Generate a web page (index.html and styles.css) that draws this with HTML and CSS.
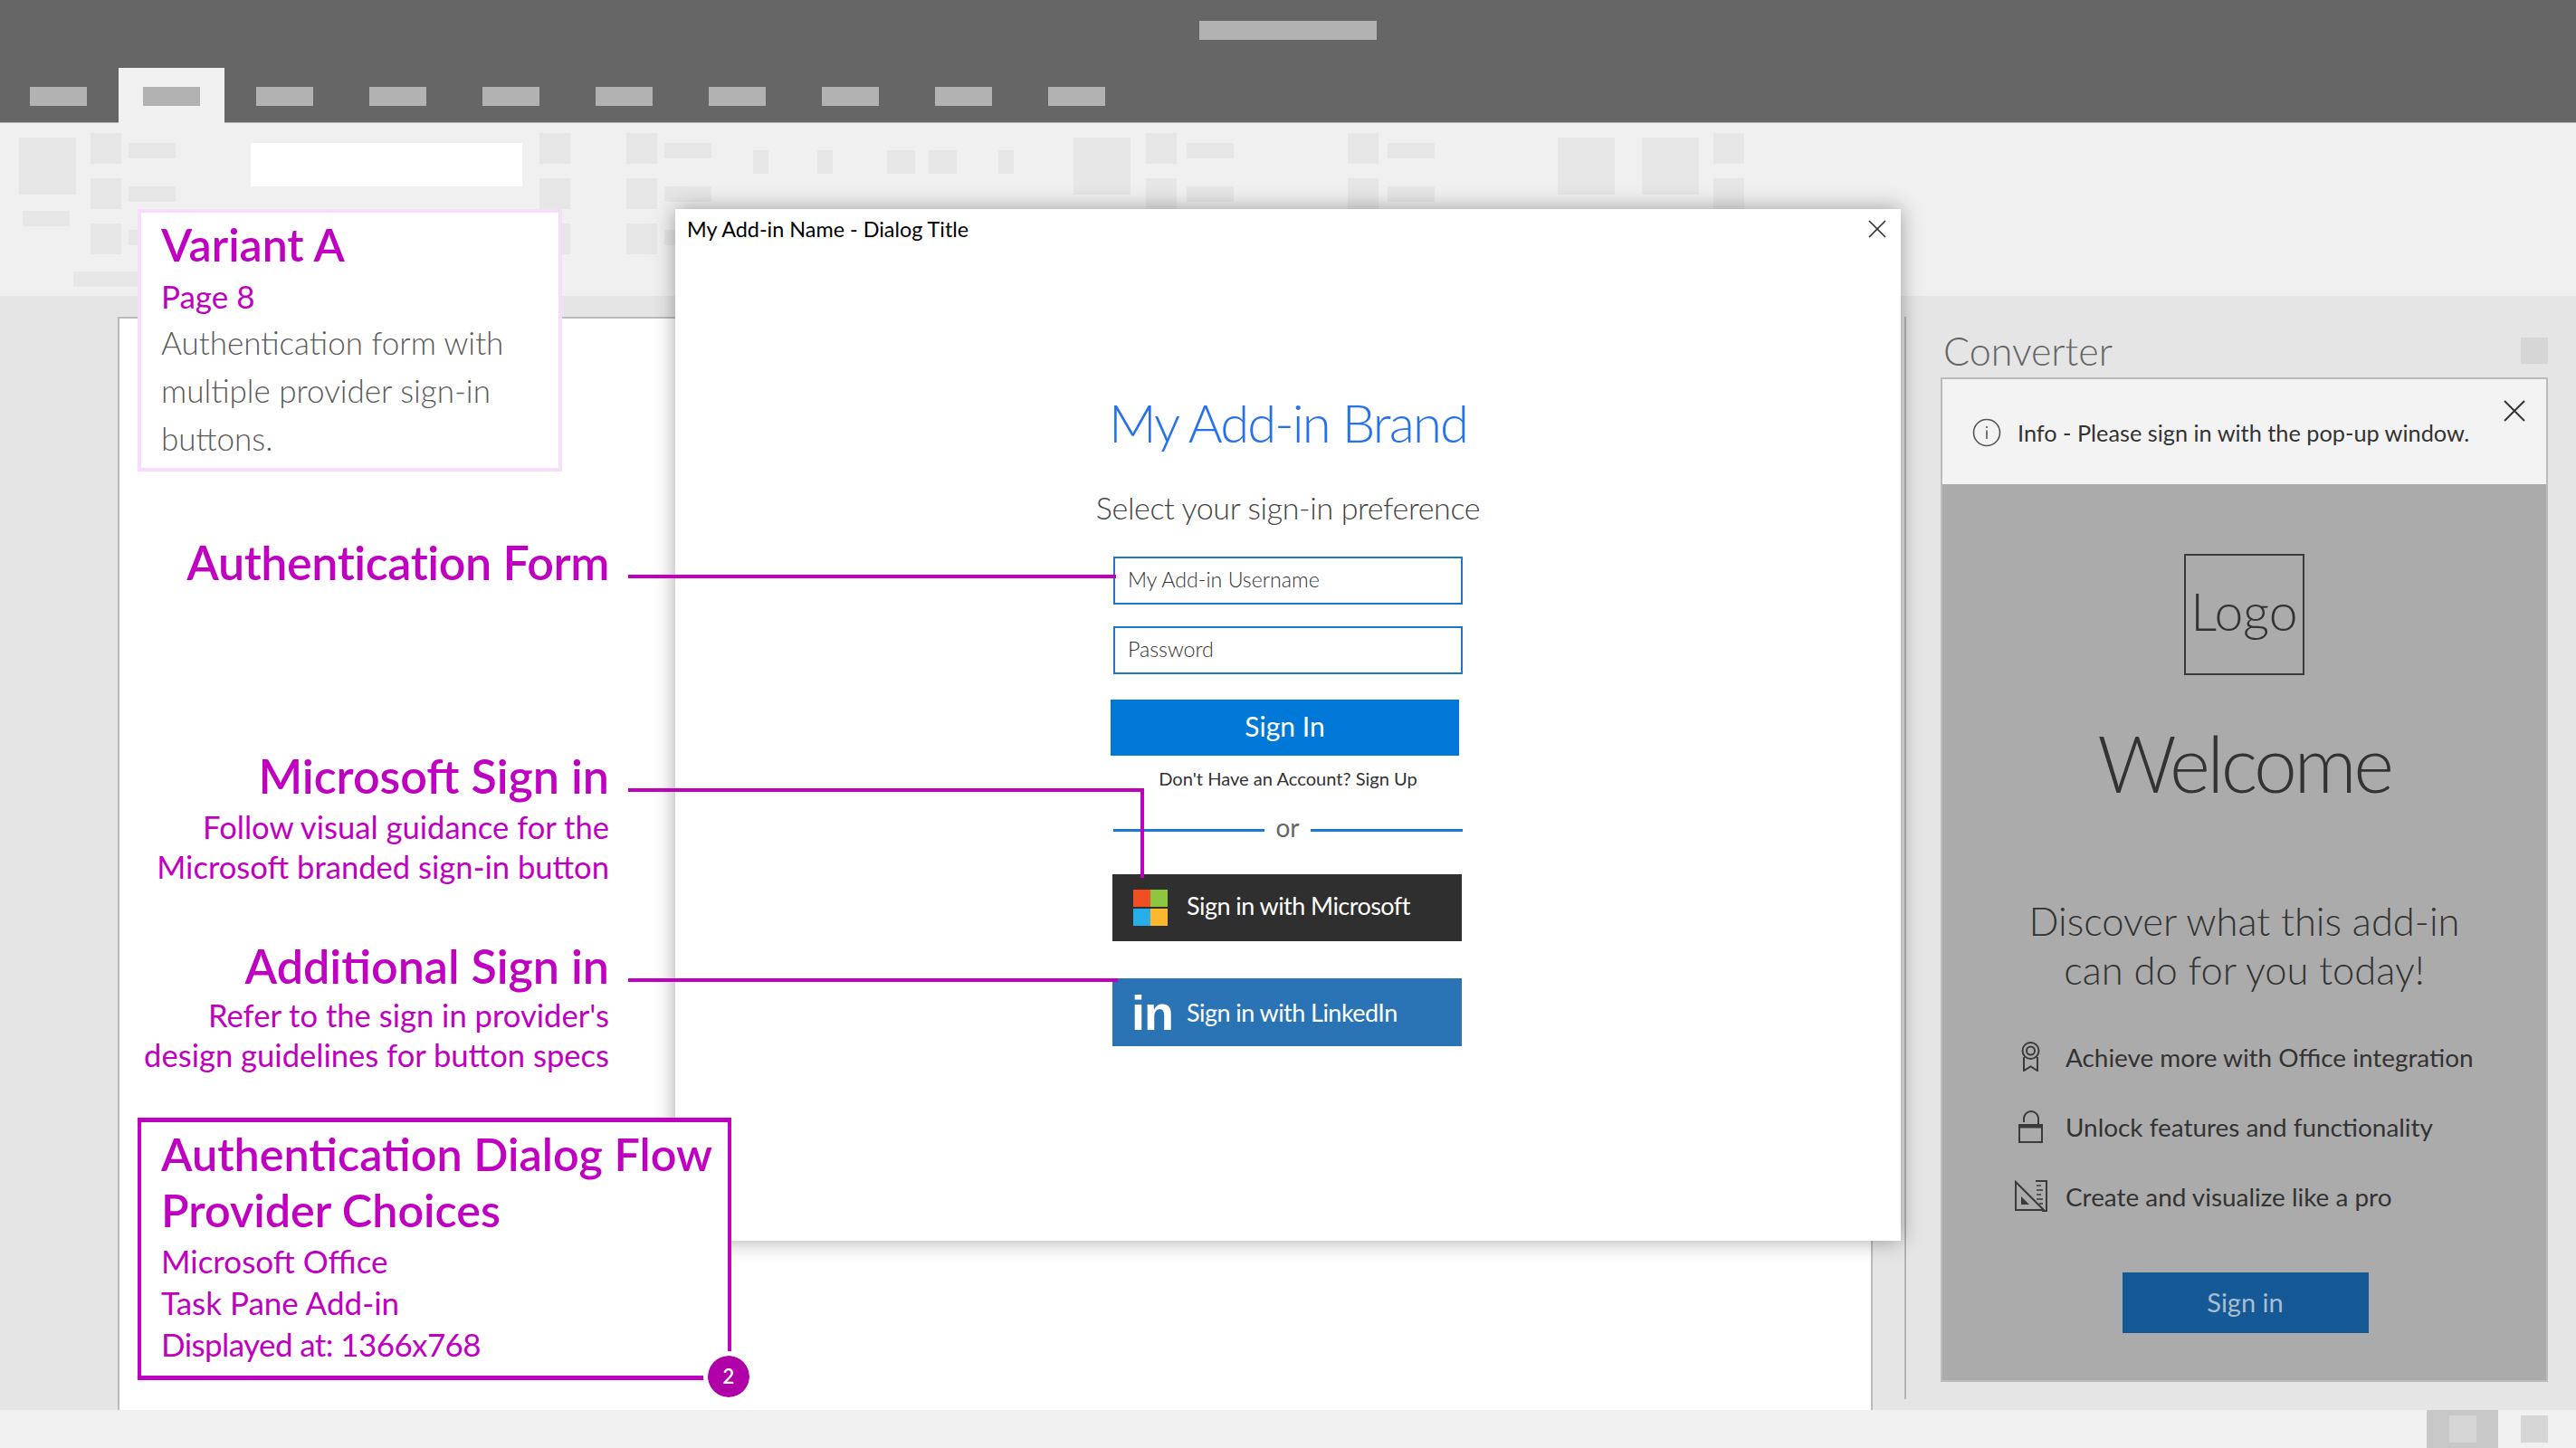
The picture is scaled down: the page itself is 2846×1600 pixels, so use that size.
FILE: index.html
```html
<!DOCTYPE html>
<html lang="en">
<head>
  <meta charset="UTF-8" />
  <title>Authentication Dialog Flow</title>
  <link rel="stylesheet" href="styles.css">
</head>
<body>
<div id="app">

  <div id="titlebar">
    <div class="title-row"><span class="ph ph-title"></span></div>
    <div class="tab-row">
      <div class="tab"><span class="ph"></span></div>
      <div class="tab active"><span class="ph"></span></div>
      <div class="tab"><span class="ph"></span></div>
      <div class="tab"><span class="ph"></span></div>
      <div class="tab"><span class="ph"></span></div>
      <div class="tab"><span class="ph"></span></div>
      <div class="tab"><span class="ph"></span></div>
      <div class="tab"><span class="ph"></span></div>
      <div class="tab"><span class="ph"></span></div>
      <div class="tab"><span class="ph"></span></div>
    </div>
  </div>

  <div id="ribbon">
    <div class="rb-stack ml-21"><i class="rb-big"></i><i class="rb-foot"></i></div>
    <div class="rb-col ml-16"><i></i><i></i><i></i><i class="rb-wide"></i></div>
    <div class="rb-labels ml-8"><i></i><i></i><i></i></div>
    <div class="rb-input ml-83"></div>
    <div class="rb-col ml-19"><i></i><i></i><i></i></div>
    <div class="rb-col ml-62"><i></i><i></i><i></i></div>
    <div class="rb-labels ml-8"><i></i><i></i><i></i></div>
    <i class="rb-small ml-46"></i>
    <i class="rb-small ml-54"></i>
    <i class="rb-small rb-med ml-60"></i>
    <i class="rb-small rb-med ml-15"></i>
    <i class="rb-small ml-46"></i>
    <i class="rb-big ml-66"></i>
    <div class="rb-col ml-17"><i></i><i></i><i></i></div>
    <div class="rb-labels ml-11"><i></i><i></i><i></i></div>
    <div class="rb-col ml-126"><i></i><i></i><i></i></div>
    <div class="rb-labels ml-10"><i></i><i></i><i></i></div>
    <i class="rb-big ml-136"></i>
    <i class="rb-big ml-30"></i>
    <div class="rb-col ml-16"><i></i><i></i><i></i></div>
  </div>

  <div id="canvas">
    <div id="doc-page"></div>
    <div id="splitter"></div>
    <div id="pane">
      <div class="pane-head">
        <span class="pane-title">Converter</span>
        <span class="pane-btn"></span>
      </div>
      <div class="pane-box">
        <div class="info-bar">
          <svg class="info-icon" width="32" height="32" viewBox="0 0 32 32">
            <circle cx="16" cy="16" r="14.5" fill="none" stroke="#555" stroke-width="1.6"/>
            <path d="M16 13.5V23" stroke="#555" stroke-width="1.6"/>
            <circle cx="16" cy="10" r="1.1" fill="#555"/>
          </svg>
          <span class="info-text">Info - Please sign in with the pop-up window.</span>
          <svg class="info-close" width="24" height="24" viewBox="0 0 24 24">
            <path d="M1 1L23 23M23 1L1 23" stroke="#333" stroke-width="2"/>
          </svg>
        </div>
        <div class="welcome">
          <div class="logo-box">Logo</div>
          <h2 class="welcome-title">Welcome</h2>
          <p class="welcome-sub">Discover what this add-in<br>can do for you today!</p>
          <ul class="feature-list">
            <li>
              <span class="feature-icon">
                <svg width="21" height="33" viewBox="0 0 21 33" fill="none" stroke="#3a3a3a" stroke-width="2">
                  <circle cx="10.5" cy="10" r="9"/>
                  <circle cx="10.5" cy="10" r="4.5"/>
                  <path d="M3 17V32L10.5 27.5L18 32V17"/>
                </svg>
              </span>
              Achieve more with Office integration
            </li>
            <li>
              <span class="feature-icon">
                <svg width="27" height="36" viewBox="0 0 27 36" fill="none" stroke="#3a3a3a" stroke-width="2">
                  <path d="M6 13V9A8 8 0 0 1 22 9V15"/>
                  <rect x="1" y="16" width="25" height="19"/>
                  <path d="M1 17.5H26" stroke-width="4"/>
                </svg>
              </span>
              Unlock features and functionality
            </li>
            <li>
              <span class="feature-icon">
                <svg width="36" height="36" viewBox="0 0 36 36" fill="none" stroke="#3a3a3a" stroke-width="2">
                  <path d="M1 2V33H32Z"/>
                  <path d="M23 1H35V34H30"/>
                  <path d="M24 6H29M24 11H31M24 16H29M24 21H31M27 26H31" stroke-width="1.5"/>
                  <path d="M7 18V27H16Z" fill="#3a3a3a" stroke="none"/>
                </svg>
              </span>
              Create and visualize like a pro
            </li>
          </ul>
          <div class="pane-signin">Sign in</div>
        </div>
      </div>
    </div>
  </div>

  <div id="statusbar">
    <span class="status-btn active"><i></i></span>
    <span class="status-btn"><i></i></span>
  </div>

  <!-- sign-in dialog sits over the document -->
  <div id="dialog">
    <div class="dialog-head">
      <span>My Add-in Name - Dialog Title</span>
      <svg width="20" height="20" viewBox="0 0 20 20">
        <path d="M1 1L19 19M19 1L1 19" stroke="#333" stroke-width="1.6"/>
      </svg>
    </div>
    <div class="dialog-body">
      <div class="brand">My Add-in Brand</div>
      <div class="prompt">Select your sign-in preference</div>
      <div class="field">My Add-in Username</div>
      <div class="field field-pass">Password</div>
      <div class="signin-btn">Sign In</div>
      <div class="signup">Don't Have an Account? Sign Up</div>
      <div class="or-row"><span></span>or<span></span></div>
      <div class="provider provider-ms">
        <span class="ms-logo"><i class="red"></i><i class="green"></i><i class="blue"></i><i class="yellow"></i></span>
        <span class="provider-label">Sign in with Microsoft</span>
      </div>
      <div class="provider provider-li">
        <span class="li-logo">in</span>
        <span class="provider-label">Sign in with LinkedIn</span>
      </div>
    </div>
  </div>

  <!-- annotations -->
  <div id="variant-box">
    <h3>Variant A</h3>
    <div class="page-no">Page 8</div>
    <p>Authentication form with<br>multiple provider sign-in<br>buttons.</p>
  </div>

  <div id="notes">
    <div class="note note-auth"><h3>Authentication Form</h3></div>
    <div class="note note-ms">
      <h3>Microsoft Sign in</h3>
      <p>Follow visual guidance for the<br>Microsoft branded sign-in button</p>
    </div>
    <div class="note note-add">
      <h3>Additional Sign in</h3>
      <p>Refer to the sign in provider's<br>design guidelines for button specs</p>
    </div>
  </div>

  <div class="wire wire-auth"></div>
  <div class="wire wire-ms"></div>
  <div class="wire wire-ms-down"></div>
  <div class="wire wire-add"></div>

  <div id="flow-box">
    <h3>Authentication Dialog Flow<br>Provider Choices</h3>
    <p>Microsoft Office<br>Task Pane Add-in<br><span class="tight">Displayed at: 1366x768</span></p>
    <span class="badge">2</span>
  </div>

</div>
</body>
</html>
```

FILE: styles.css
```css
:root {
  --magenta: #c000c0;
  --blue: #0078d7;
  --ink: #333333;
  --block: #e6e6e6;
  --chip: #b2b2b2;
  --edge: #bbbbbb;
}
* { box-sizing: border-box; }
body {
  margin: 0;
  font-family: Lato, "Open Sans", sans-serif;
  color: var(--ink);
}
#app {
  position: relative;
  width: 2846px;
  height: 1600px;
  overflow: hidden;
  display: flex;
  flex-direction: column;
}
h2, h3, p, ul { margin: 0; padding: 0; }

/* title bar */
#titlebar {
  height: 136px;
  background: #666666;
  border-bottom: 1px solid #b4b4b4;
  flex: none;
}
.title-row {
  display: flex;
  justify-content: center;
  padding-top: 23px;
  height: 75px;
}
.ph {
  display: block;
  width: 63px;
  height: 21px;
  background: var(--chip);
}
.ph-title { width: 196px; }
.tab-row {
  display: flex;
  padding-left: 33px;
  gap: 62px;
}
.tab {
  width: 63px;
  height: 60px;
  padding-top: 21px;
  position: relative;
}
.tab.active::before {
  content: "";
  position: absolute;
  left: -27px;
  top: 0;
  width: 117px;
  height: 61px;
  background: #f0f0f0;
}
.tab .ph { position: relative; }

/* ribbon wireframe */
#ribbon {
  height: 191px;
  background: #f0f0f0;
  display: flex;
  align-items: flex-start;
  flex: none;
}
#ribbon i { display: block; background: var(--block); }
.rb-big { width: 63px; height: 63px; margin-top: 16px; }
.rb-stack { width: 63px; }
.rb-stack .rb-foot { width: 52px; height: 17px; margin: 18px 0 0 4px; }
.rb-col { width: 34px; margin-top: 11px; display: flex; flex-direction: column; gap: 16px; }
.rb-col i { height: 34px; }
.rb-col .rb-wide { width: 73px; height: 17px; margin: 3px 0 0 -19px; }
.rb-labels { width: 52px; margin-top: 22px; display: flex; flex-direction: column; gap: 31px; }
.rb-labels i { height: 17px; }
.rb-input { width: 300px; height: 48px; margin-top: 22px; background: #fff; }
.rb-small { width: 17px; height: 26px; margin-top: 30px; }
.rb-med { width: 31px; }
.ml-8 { margin-left: 8px; }
.ml-10 { margin-left: 10px; }
.ml-11 { margin-left: 11px; }
.ml-15 { margin-left: 15px; }
.ml-16 { margin-left: 16px; }
.ml-17 { margin-left: 17px; }
.ml-19 { margin-left: 19px; }
.ml-21 { margin-left: 21px; }
.ml-30 { margin-left: 30px; }
.ml-46 { margin-left: 46px; }
.ml-54 { margin-left: 54px; }
.ml-60 { margin-left: 60px; }
.ml-62 { margin-left: 62px; }
.ml-66 { margin-left: 66px; }
.ml-83 { margin-left: 83px; }
.ml-126 { margin-left: 126px; }
.ml-136 { margin-left: 136px; }

/* canvas */
#canvas {
  flex: 1;
  background: #e5e5e5;
  display: flex;
  min-height: 0;
}
#doc-page {
  width: 1939px;
  margin: 23px 0 0 130px;
  background: #fff;
  border: 2px solid var(--edge);
  border-bottom: none;
}
#splitter {
  width: 2px;
  margin: 23px 0 12px 35px;
  background: #b4b4b4;
}

/* task pane */
#pane {
  width: 671px;
  margin: 0 0 31px 38px;
  display: flex;
  flex-direction: column;
}
.pane-head {
  height: 90px;
  display: flex;
  justify-content: space-between;
}
.pane-title {
  font-size: 43px;
  font-weight: 300;
  line-height: 60px;
  color: #666;
  margin: 31px 0 0 3px;
}
.pane-btn {
  width: 30px;
  height: 29px;
  margin-top: 46px;
  background: #d6d6d6;
}
.pane-box {
  flex: 1;
  border: 2px solid var(--edge);
  display: flex;
  flex-direction: column;
}
.info-bar {
  height: 116px;
  background: #f3f3f3;
  display: flex;
  align-items: flex-start;
  position: relative;
  padding: 43px 0 0 33px;
}
.info-text {
  font-size: 25.3px;
  line-height: 32px;
  margin-left: 18px;
  color: #333;
}
.info-close {
  position: absolute;
  right: 23px;
  top: 23px;
}
.welcome {
  flex: 1;
  background: #ababab;
  display: flex;
  flex-direction: column;
  align-items: center;
}
.logo-box {
  width: 133px;
  height: 134px;
  margin-top: 77px;
  border: 2px solid #3a3a3a;
  font-size: 57px;
  font-weight: 300;
  line-height: 122px;
  text-align: center;
}
.welcome-title {
  font-size: 86px;
  font-weight: 300;
  letter-spacing: -3.5px;
  line-height: 100px;
  margin-top: 47px;
}
.welcome-sub {
  font-size: 43.5px;
  font-weight: 300;
  line-height: 54px;
  text-align: center;
  margin-top: 97px;
}
.feature-list {
  list-style: none;
  align-self: flex-start;
  margin: 31px 0 0 77px;
}
.feature-list li {
  height: 77px;
  display: flex;
  align-items: center;
  gap: 18px;
  font-size: 27.9px;
}
.feature-icon {
  width: 41px;
  display: flex;
  justify-content: center;
}
.pane-signin {
  width: 272px;
  height: 67px;
  margin: 46px -2px 0 0;
  background: #155a96;
  color: #a9bdcf;
  font-size: 29px;
  line-height: 65px;
  text-align: center;
}

/* status bar */
#statusbar {
  height: 42px;
  background: #f0f0f0;
  flex: none;
  display: flex;
  justify-content: flex-end;
  padding-right: 31px;
  gap: 25px;
}
.status-btn {
  display: flex;
  align-items: center;
  justify-content: center;
  height: 42px;
  width: 30px;
}
.status-btn.active { width: 79px; background: #c8c8c8; }
.status-btn i { display: block; width: 30px; height: 30px; background: #d6d6d6; }

/* dialog */
#dialog {
  position: absolute;
  left: 746px;
  top: 231px;
  width: 1354px;
  height: 1140px;
  background: #fff;
  box-shadow: 0 0 22px rgba(0, 0, 0, 0.35);
}
.dialog-head {
  height: 44px;
  padding: 0 16px 0 13px;
  display: flex;
  align-items: center;
  justify-content: space-between;
  font-size: 23.4px;
  color: #000;
}
.dialog-body {
  padding-top: 2px;
  display: flex;
  flex-direction: column;
  align-items: center;
}
.brand {
  margin-top: 150px;
  font-size: 58px;
  font-weight: 300;
  letter-spacing: -1.9px;
  line-height: 80px;
  color: #2672ec;
}
.prompt {
  margin-top: 29px;
  font-size: 34px;
  font-weight: 300;
  letter-spacing: -0.36px;
  line-height: 50px;
  color: #444;
}
.field {
  width: 386px;
  height: 53px;
  margin-top: 29px;
  border: 2px solid #1a78d0;
  padding-left: 14px;
  font-size: 23.2px;
  font-weight: 300;
  line-height: 47px;
  color: #333;
}
.field-pass { margin-top: 24px; }
.signin-btn {
  width: 385px;
  height: 62px;
  margin: 28px 7px 0 0;
  background: var(--blue);
  color: #fff;
  font-size: 30px;
  line-height: 59px;
  text-align: center;
}
.signup {
  margin-top: 10px;
  font-size: 20.1px;
  line-height: 30px;
  color: #333;
}
.or-row {
  width: 386px;
  height: 40px;
  margin: 19px 1px 4px 0;
  display: flex;
  align-items: center;
  gap: 12px;
  font-size: 28px;
  line-height: 36px;
  color: #666;
}
.or-row span {
  flex: 1;
  height: 3px;
  margin-top: 7px;
  background: #1a78d0;
}
.provider {
  width: 386px;
  margin-right: 2px;
  display: flex;
  align-items: center;
  color: #fff;
  font-size: 27px;
  letter-spacing: -0.55px;
  position: relative;
}
.provider-ms {
  height: 74px;
  margin-top: 28px;
  padding-bottom: 0;
  background: #2f2f2f;
}
.provider-ms .provider-label { top: 18px; }
.provider-li {
  height: 75px;
  margin-top: 41px;
  background: #2a74b5;
}
.provider-label {
  position: absolute;
  left: 82px;
}
.ms-logo {
  width: 38px;
  height: 40px;
  margin-left: 23px;
  display: grid;
  grid-template-columns: 1fr 1fr;
  grid-template-rows: 19px 19px;
  row-gap: 2px;
}
.ms-logo .red { background: #f04e23; }
.ms-logo .green { background: #8cc63f; }
.ms-logo .blue { background: #27aee9; }
.ms-logo .yellow { background: #fdb92e; }
.li-logo {
  margin-left: 21px;
  font-family: "Liberation Sans", sans-serif;
  font-size: 54px;
  font-weight: 700;
  letter-spacing: -1px;
  line-height: 64px;
}

/* annotations */
#variant-box {
  position: absolute;
  left: 152px;
  top: 231px;
  width: 469px;
  height: 290px;
  background: #fff;
  border: 4px solid #f8dcfc;
  padding: 4px 0 0 22px;
}
#variant-box h3 {
  font-size: 50px;
  font-weight: 600;
  line-height: 62px;
  color: var(--magenta);
}
.page-no {
  margin-top: 3px;
  font-size: 35px;
  line-height: 46px;
  color: var(--magenta);
}
#variant-box p {
  margin-top: 2px;
  font-size: 35px;
  font-weight: 300;
  line-height: 53px;
  color: #5a5a5a;
}
#notes {
  position: absolute;
  left: 0;
  top: 590px;
  width: 673px;
  text-align: right;
  color: var(--magenta);
}
.note h3 {
  font-size: 52px;
  font-weight: 600;
  line-height: 62px;
}
.note-auth h3 { letter-spacing: -0.4px; }
.note p {
  font-size: 34.6px;
  line-height: 44px;
}
.note-ms { margin-top: 174px; }
.note-ms p { margin-top: 4px; }
.note-add { margin-top: 56px; }
.note-add p { margin-top: 2px; }
.wire {
  position: absolute;
  background: var(--magenta);
  height: 4px;
}
.wire-auth { left: 694px; top: 635px; width: 539px; }
.wire-ms { left: 694px; top: 871px; width: 570px; }
.wire-ms-down { left: 1260px; top: 871px; width: 4px; height: 99px; }
.wire-add { left: 694px; top: 1081px; width: 541px; }
#flow-box {
  position: absolute;
  left: 152px;
  top: 1235px;
  width: 656px;
  height: 290px;
  background: #fff;
  border: solid var(--magenta);
  border-width: 5px 4px;
  padding: 4px 0 0 22px;
  color: var(--magenta);
}
#flow-box h3 {
  font-size: 50.3px;
  font-weight: 600;
  line-height: 62px;
  white-space: nowrap;
}
#flow-box p {
  margin-top: 2px;
  font-size: 35px;
  line-height: 46px;
}
.tight { letter-spacing: -0.6px; }
.badge {
  position: absolute;
  right: -29px;
  bottom: -29px;
  width: 56px;
  height: 56px;
  border: 5px solid #fff;
  border-radius: 50%;
  background: #b000a8;
  background-clip: padding-box;
  color: #fff;
  font-size: 22px;
  font-weight: 600;
  line-height: 46px;
  text-align: center;
}
```
